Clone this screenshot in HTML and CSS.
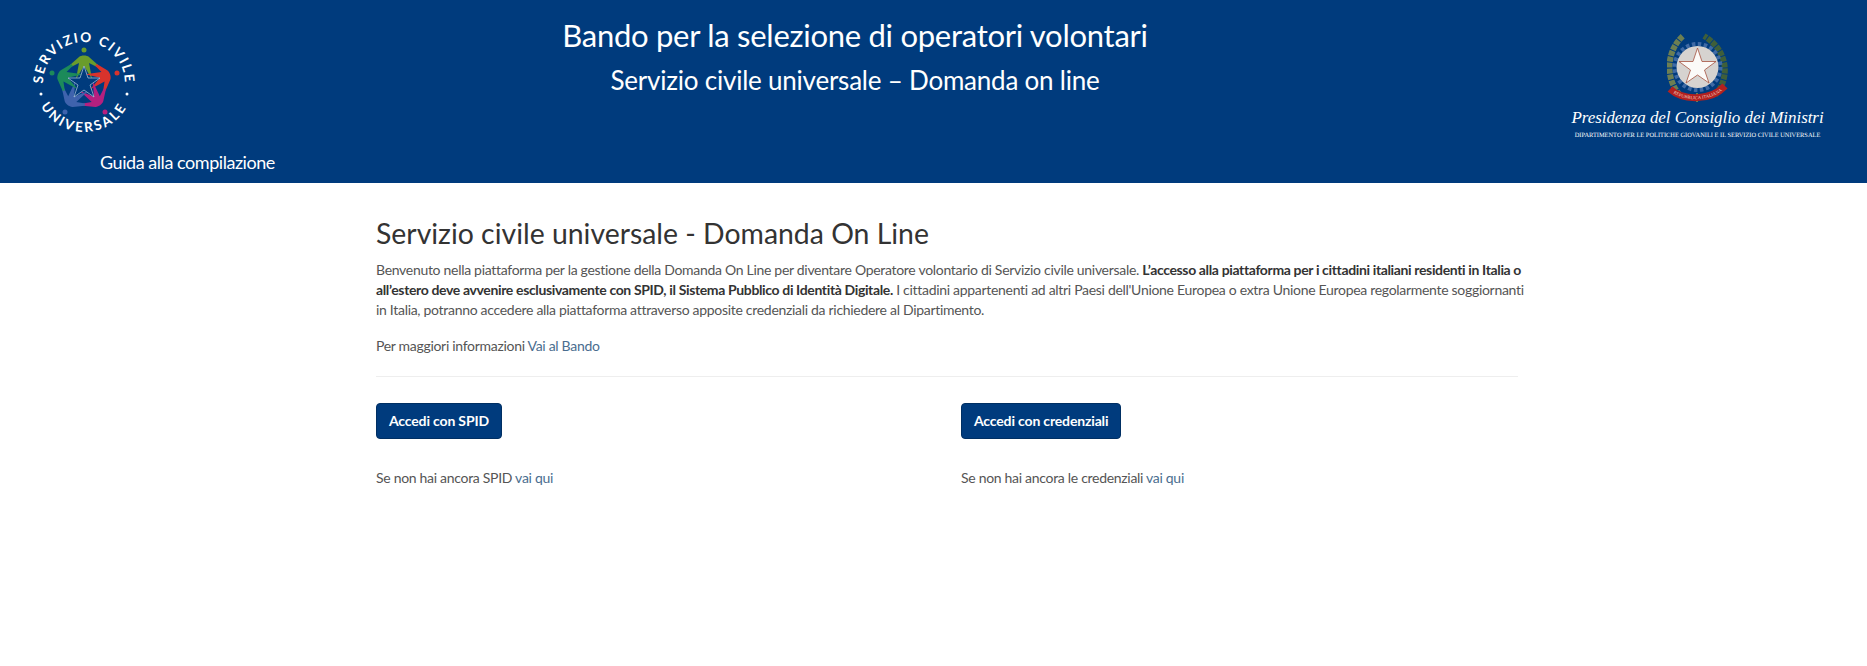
FILE: index.html
```html
<!DOCTYPE html>
<html lang="it">
<head>
    <meta charset="UTF-8">
    <meta name="viewport" content="width=device-width, initial-scale=1.0">
    <title>Domanda On Line</title>
    <link rel="stylesheet" href="styles.css">
</head>
<body>
<header class="topbar">
    <div class="brand">
        <svg class="brand-logo" width="110" height="110" viewBox="0 0 110 110">
            <defs>
                <path id="arc-top" d="M16.800 70 A41 41 0 1 1 93.200 70"/>
                <path id="arc-bottom" d="M6 55 A49 49 0 0 0 104 55"/>
                <path id="person" d="M41 37 L50 29 C52 27 58 27 60 29 L69 37 L68 39 L60 35 L63 51 L55 38 L47 51 L50 35 L42 39 Z"/>
            </defs>
            <text class="logo-text"><textPath href="#arc-top" startOffset="50%" text-anchor="middle">SERVIZIO CIVILE</textPath></text>
            <text class="logo-text logo-text-wide"><textPath href="#arc-bottom" startOffset="50%" text-anchor="middle">UNIVERSALE</textPath></text>
            <circle cx="12" cy="66" r="1.500" fill="white"/>
            <circle cx="98" cy="66" r="1.500" fill="white"/>
            <use href="#person" fill="#6a9c2c"/>
            <use href="#person" fill="#d8332c" transform="rotate(72 55 55)"/>
            <use href="#person" fill="#b5207f" transform="rotate(144 55 55)"/>
            <use href="#person" fill="#3f63ad" transform="rotate(216 55 55)"/>
            <use href="#person" fill="#1c8a5a" transform="rotate(288 55 55)"/>
            <circle cx="55" cy="22" r="2.500" fill="#6a9c2c"/>
            <circle cx="88" cy="45" r="2.500" fill="#d8332c"/>
            <circle cx="76" cy="84" r="2.500" fill="#b5207f"/>
            <circle cx="36" cy="84" r="2.500" fill="#3f63ad"/>
            <circle cx="23" cy="45" r="2.500" fill="#1c8a5a"/>
            <path d="M55 38 L59 50 L71 50 L61 57 L65 69 L55 62 L45 69 L49 57 L39 50 L51 50 Z" fill="#003b7d" stroke="#cfe0ee" stroke-width="0.600"/>
        </svg>
        <a class="guide-link" href="#">Guida alla compilazione</a>
    </div>
    <div class="title-block">
        <h1>Bando per la selezione di operatori volontari</h1>
        <h2>Servizio civile universale – Domanda on line</h2>
    </div>
    <div class="gov">
        <svg class="gov-emblem" width="61" height="70" viewBox="0 0 61 70">
            <defs>
                <path id="ribbon-arc" d="M3 56 C16 68 44 68 58 53"/>
            </defs>
            <path d="M13 62 C-2 46 -1 18 16 3" fill="none" stroke="#6d7f52" stroke-width="6" stroke-dasharray="5 1"/>
            <path d="M48 62 C63 46 62 18 37 3" fill="none" stroke="#3f5f3a" stroke-width="6" stroke-dasharray="5 1"/>
            <circle cx="30.500" cy="34" r="23" fill="none" stroke="#3f6aa5" stroke-width="4" stroke-dasharray="3.500 2.500"/>
            <circle cx="30.500" cy="34" r="21" fill="#d6d3d0"/>
            <path d="M30.500 15 L35 28.500 L49 28.500 L37.500 37 L42 50 L30.500 42 L19 50 L23.500 37 L12 28.500 L26 28.500 Z" fill="#fbfaf8" stroke="#a5523f" stroke-width="0.800"/>
            <path d="M30 60 L30 69" stroke="#6d7f52" stroke-width="2"/>
            <path d="M3 56 C16 68 44 68 58 53" fill="none" stroke="#b3201f" stroke-width="7"/>
            <text class="ribbon-text" dy="1.500"><textPath href="#ribbon-arc" startOffset="50%" text-anchor="middle">REPUBBLICA ITALIANA</textPath></text>
        </svg>
        <div class="gov-name">Presidenza del Consiglio dei Ministri</div>
        <div class="gov-dept">DIPARTIMENTO PER LE POLITICHE GIOVANILI E IL SERVIZIO CIVILE UNIVERSALE</div>
    </div>
</header>
<main class="content">
    <h3>Servizio civile universale - Domanda On Line</h3>
    <p class="intro">Benvenuto nella piattaforma per la gestione della Domanda On Line per diventare Operatore volontario di Servizio civile universale. <strong>L’accesso alla piattaforma per i cittadini italiani residenti in Italia o all’estero deve avvenire esclusivamente con SPID, il Sistema Pubblico di Identità Digitale.</strong> I cittadini appartenenti ad altri Paesi dell'Unione Europea o extra Unione Europea regolarmente soggiornanti in Italia, potranno accedere alla piattaforma attraverso apposite credenziali da richiedere al Dipartimento.</p>
    <p class="more">Per maggiori informazioni <a href="#">Vai al Bando</a></p>
    <hr>
    <div class="access">
        <div>
            <a class="btn" href="#">Accedi con SPID</a>
            <p class="hint">Se non hai ancora SPID <a href="#">vai qui</a></p>
        </div>
        <div>
            <a class="btn" href="#">Accedi con credenziali</a>
            <p class="hint">Se non hai ancora le credenziali <a href="#">vai qui</a></p>
        </div>
    </div>
</main>
</body>
</html>
```

FILE: styles.css
```css
body {
    font-family: Lato, "Open Sans", Arial, sans-serif;
    background: #fff;
    color: #555;
    margin: 0;
    padding: 0;
}
a {
    color: #4a6d8f;
    text-decoration: none;
}
.topbar {
    background: #003b7d;
    color: white;
    height: 183px;
    display: grid;
    grid-template-columns: 360px 990px 1fr;
}
.brand {
    padding: 28px 0 0 29px;
}
.brand-logo {
    display: block;
}
.logo-text {
    fill: white;
    font-size: 13.500px;
    font-weight: 700;
    letter-spacing: 1.700px;
}
.logo-text-wide {
    letter-spacing: 2.400px;
}
.guide-link {
    display: block;
    color: white;
    font-size: 18px;
    letter-spacing: -0.450px;
    line-height: 24px;
    margin: 12px 0 0 71px;
}
.title-block {
    text-align: center;
    padding-top: 15px;
}
.title-block h1 {
    font-size: 31px;
    letter-spacing: -0.270px;
    line-height: 40px;
    font-weight: 400;
    margin: 0;
}
.title-block h2 {
    font-size: 26px;
    letter-spacing: -0.220px;
    line-height: 36px;
    font-weight: 400;
    margin: 7px 0 0;
}
.gov {
    display: flex;
    flex-direction: column;
    align-items: center;
    padding: 33px 0 0 178px;
}
.gov-emblem {
    display: block;
}
.ribbon-text {
    fill: #f3d9c8;
    font-family: "Liberation Serif", serif;
    font-size: 4.500px;
}
.gov-name {
    font-family: "Liberation Serif", serif;
    font-style: italic;
    font-size: 17px;
    letter-spacing: -0.060px;
    line-height: 22px;
    margin-top: 4px;
    white-space: nowrap;
}
.gov-dept {
    font-family: "Liberation Serif", serif;
    font-size: 6.400px;
    text-rendering: geometricPrecision;
    line-height: 10px;
    margin-top: 2px;
    white-space: nowrap;
}
.content {
    width: 1154px;
    margin-left: 376px;
    padding-top: 33px;
}
.content h3 {
    font-size: 28.400px;
    line-height: 34px;
    font-weight: 400;
    color: #333;
    margin: 0 0 10px;
}
.intro, .more {
    font-size: 14px;
    letter-spacing: -0.300px;
    line-height: 20.200px;
    margin: 0;
}
.intro strong {
    color: #333;
    letter-spacing: -0.360px;
}
.more {
    margin-top: 15px;
}
hr {
    width: 1142px;
    margin: 20px 0 26px;
    border: none;
    border-top: 1px solid #eee;
}
.access {
    display: grid;
    grid-template-columns: 585px 1fr;
}
.btn {
    display: inline-block;
    background: #003b7d;
    color: white;
    font-size: 14px;
    font-weight: 700;
    letter-spacing: -0.160px;
    line-height: 20px;
    padding: 7px 12px;
    border: 1px solid #002f63;
    border-radius: 4px;
}
.hint {
    font-size: 14px;
    letter-spacing: -0.300px;
    line-height: 20px;
    margin: 29px 0 0;
}
```
